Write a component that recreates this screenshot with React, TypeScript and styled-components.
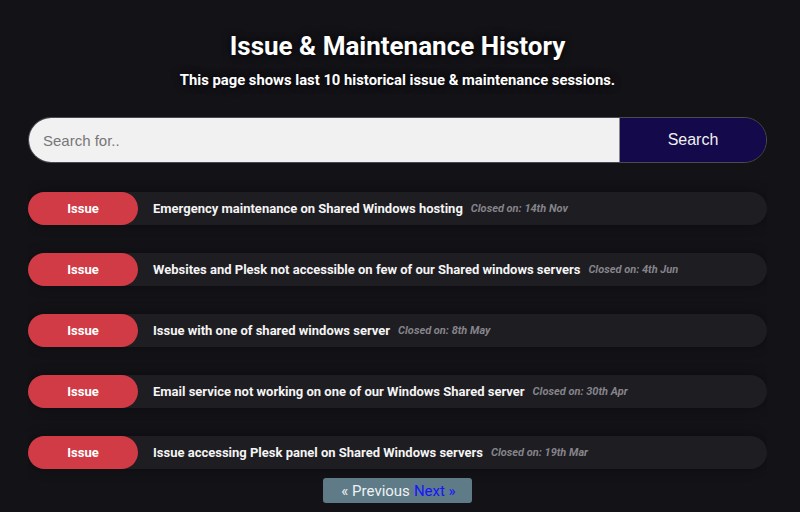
import styled, { createGlobalStyle } from "styled-components";

type Session = {
  title: string,
  closed: string
}

const sessions: Session[] = [
  { title: "Emergency maintenance on Shared Windows hosting", closed: "14th Nov" },
  { title: "Websites and Plesk not accessible on few of our Shared windows servers", closed: "4th Jun" },
  { title: "Issue with one of shared windows server", closed: "8th May" },
  { title: "Email service not working on one of our Windows Shared server", closed: "30th Apr" },
  { title: "Issue accessing Plesk panel on Shared Windows servers", closed: "19th Mar" },
];

const App = () => {
  return (
    <>
      <GlobalStyle />
      <Page>
        <Title>Issue &amp; Maintenance History</Title>
        <Subtitle>This page shows last 10 historical issue &amp; maintenance sessions.</Subtitle>
        <SearchBar>
          <SearchInput placeholder="Search for.." />
          <SearchBtn>Search</SearchBtn>
        </SearchBar>
        <List>
          {sessions.map((s) => (
            <Row key={s.title}>
              <Badge>Issue</Badge>
              <RowTitle>{s.title}</RowTitle>
              <Closed>Closed on: {s.closed}</Closed>
            </Row>
          ))}
        </List>
        <Pager>
          <PagerLink>« Previous</PagerLink>
          <PagerLink $active>Next »</PagerLink>
        </Pager>
      </Page>
    </>
  );
};

const GlobalStyle = createGlobalStyle`
  html, body {
    margin: 0;
    padding: 0;
    background: #131217;
  }
  body {
    font-family: Roboto, "Liberation Sans", sans-serif;
    color: white;
  }
`;

const Page = styled.div`
  width: 739px;
  margin-left: 28px;
  height: 512px;
  overflow: hidden;
  display: flex;
  flex-direction: column;
  align-items: stretch;
`;
const Title = styled.h1`
  margin: 30px 0 0;
  font-size: 26px;
  line-height: 32px;
  font-weight: 700;
  text-align: center;
  text-shadow: 0 0 8px rgba(0, 0, 0, 0.9);
`;
const Subtitle = styled.p`
  margin: 9px 0 0;
  font-size: 14.8px;
  line-height: 18px;
  font-weight: 700;
  text-align: center;
  text-shadow: 0 0 8px rgba(0, 0, 0, 0.9);
`;
const SearchBar = styled.div`
  display: flex;
  height: 46px;
  margin-top: 28px;
  border: 1px solid #4a4a52;
  border-radius: 24px;
  overflow: hidden;
  box-sizing: border-box;
`;
const SearchInput = styled.input`
  flex: 1;
  border: none;
  outline: none;
  background: #f1f1f1;
  padding: 0 14px;
  font-family: "Liberation Sans", Arial, sans-serif;
  font-size: 15px;
  color: #333;
  &::placeholder {
    color: #777;
  }
`;
const SearchBtn = styled.button`
  width: 147px;
  border: none;
  border-left: 1px solid #888;
  background: #14094a;
  color: #f0f0f0;
  font-family: "Liberation Sans", Arial, sans-serif;
  font-size: 16px;
  padding: 0;
  cursor: pointer;
`;
const List = styled.div`
  display: flex;
  flex-direction: column;
  gap: 28px;
  margin-top: 29px;
`;
const Row = styled.div`
  display: flex;
  align-items: center;
  height: 33px;
  background: #1e1d22;
  border-radius: 17px;
  box-shadow: 0 0 12px rgba(0, 0, 0, 0.35);
`;
const Badge = styled.div`
  width: 110px;
  height: 33px;
  border-radius: 17px;
  background: #d13b45;
  display: flex;
  align-items: center;
  justify-content: center;
  font-size: 13px;
  font-weight: 700;
  flex-shrink: 0;
`;
const RowTitle = styled.span`
  margin-left: 15px;
  font-size: 13px;
  font-weight: 700;
  color: #f4f4f4;
`;
const Closed = styled.span`
  margin-left: 8px;
  font-size: 11px;
  font-weight: 700;
  font-style: italic;
  color: #85848a;
`;
const Pager = styled.div`
  align-self: center;
  margin-top: 9px;
  height: 25px;
  padding: 0 16px 0 18px;
  display: flex;
  align-items: center;
  gap: 4px;
  background: #5e7b87;
  border-radius: 3px;
  font-size: 15px;
`;
const PagerLink = styled.span<{ $active?: boolean }>`
  color: ${(p) => (p.$active ? "#1515ff" : "#eef2f4")};
  cursor: pointer;
`;

export default App;
